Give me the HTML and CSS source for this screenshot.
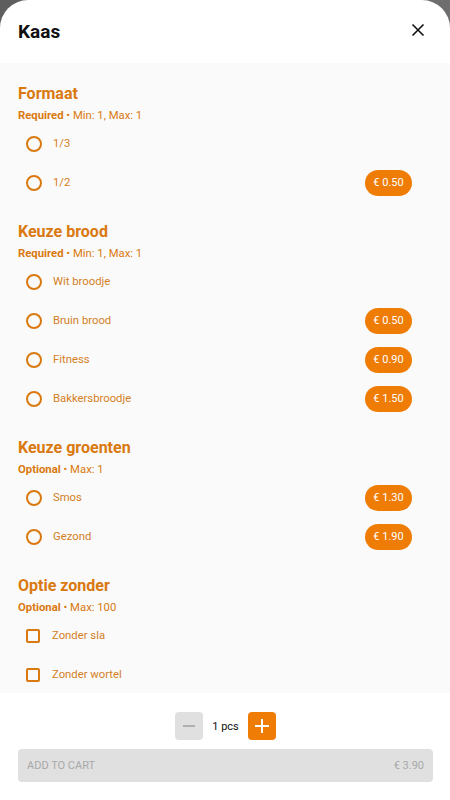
FILE: index.html
```html
<!DOCTYPE html>
<html>
<head>
<meta charset="utf-8">
<link rel="stylesheet" href="styles.css">
</head>
<body>
<div class="sheet">
  <header class="head">
    <h1 class="title">Kaas</h1>
    <button class="close" aria-label="Close">
      <svg width="14" height="14" viewBox="0 0 14 14"><path d="M1.5 1.5L12.5 12.5M12.5 1.5L1.5 12.5" stroke="#111" stroke-width="1.6" fill="none"/></svg>
    </button>
  </header>
  <main class="content">
    <section class="group">
      <h2 class="g-title">Formaat</h2>
      <div class="g-sub"><b>Required</b> • Min: 1, Max: 1</div>
      <div class="row"><span class="radio"></span><span class="label">1/3</span></div>
      <div class="row"><span class="radio"></span><span class="label">1/2</span><span class="pill">€ 0.50</span></div>
    </section>
    <section class="group">
      <h2 class="g-title">Keuze brood</h2>
      <div class="g-sub"><b>Required</b> • Min: 1, Max: 1</div>
      <div class="row"><span class="radio"></span><span class="label">Wit broodje</span></div>
      <div class="row"><span class="radio"></span><span class="label">Bruin brood</span><span class="pill">€ 0.50</span></div>
      <div class="row"><span class="radio"></span><span class="label">Fitness</span><span class="pill">€ 0.90</span></div>
      <div class="row"><span class="radio"></span><span class="label">Bakkersbroodje</span><span class="pill">€ 1.50</span></div>
    </section>
    <section class="group">
      <h2 class="g-title">Keuze groenten</h2>
      <div class="g-sub"><b>Optional</b> • Max: 1</div>
      <div class="row"><span class="radio"></span><span class="label">Smos</span><span class="pill">€ 1.30</span></div>
      <div class="row"><span class="radio"></span><span class="label">Gezond</span><span class="pill">€ 1.90</span></div>
    </section>
    <section class="group">
      <h2 class="g-title">Optie zonder</h2>
      <div class="g-sub"><b>Optional</b> • Max: 100</div>
      <div class="row"><span class="check"></span><span class="label">Zonder sla</span></div>
      <div class="row"><span class="check"></span><span class="label">Zonder wortel</span></div>
    </section>
  </main>
  <footer class="foot">
    <div class="qty">
      <button class="qbtn minus"><svg width="12" height="12" viewBox="0 0 12 12"><path d="M0 6H12" stroke="#b0b0b0" stroke-width="2"/></svg></button>
      <span class="qtext">1 pcs</span>
      <button class="qbtn plus"><svg width="14" height="14" viewBox="0 0 14 14"><path d="M0 7H14M7 0V14" stroke="#fff" stroke-width="2"/></svg></button>
    </div>
    <button class="cart"><span>ADD TO CART</span><span>€ 3.90</span></button>
  </footer>
</div>
</body>
</html>
```
FILE: styles.css
```css
* { box-sizing: border-box; }
html, body { margin: 0; padding: 0; }
body {
  width: 450px;
  height: 800px;
  overflow: hidden;
  background: linear-gradient(135deg, #5e5e5e, #8a8a8a);
  font-family: Roboto, "Noto Sans", sans-serif;
}
.sheet {
  height: 800px;
  background: #fff;
  border-radius: 28px 28px 0 0;
  display: flex;
  flex-direction: column;
  overflow: hidden;
}
.head {
  height: 63px;
  flex: none;
  display: flex;
  align-items: center;
  justify-content: space-between;
  padding: 0 25px 0 18px;
}
.title {
  margin: 0;
  font-size: 19px;
  font-weight: 700;
  color: #111;
  line-height: 24px;
  margin-top: 1px;
}
.close {
  border: 0;
  background: none;
  padding: 0;
  width: 14px;
  height: 14px;
  display: flex;
  margin-top: -4px;
}
.content {
  flex: 1;
  background: #fafafa;
  padding-top: 1px;
  overflow: hidden;
}
.group { margin-top: 20px; }
.g-title {
  margin: 0;
  padding-left: 18px;
  font-size: 16px;
  line-height: 20px;
  font-weight: 700;
  color: #d9790f;
}
.g-sub {
  margin-top: 4px;
  padding-left: 18px;
  font-size: 11.3px;
  line-height: 16px;
  color: #d9790f;
}
.g-sub b { font-weight: 700; }
.row {
  height: 39px;
  display: flex;
  align-items: center;
  padding: 0 38px 0 26px;
}
.radio {
  width: 16px;
  height: 16px;
  border: 2px solid #d9790f;
  border-radius: 50%;
  flex: none;
  margin-right: 11px;
}
.check {
  width: 14px;
  height: 14px;
  border: 2px solid #d9790f;
  border-radius: 2px;
  flex: none;
  margin-right: 12px;
}
.label {
  font-size: 11.3px;
  color: #d4801f;
  flex: 1;
}
.pill {
  background: #ef7c05;
  color: #fff;
  font-size: 11px;
  height: 26px;
  width: 47px;
  border-radius: 13px;
  display: flex;
  align-items: center;
  justify-content: center;
}
.foot {
  flex: none;
  height: 107px;
  background: #fff;
  padding: 19px 17px 0 18px;
  display: flex;
  flex-direction: column;
  align-items: center;
}
.qty {
  display: flex;
  align-items: center;
  height: 28px;
}
.qbtn {
  width: 28px;
  height: 28px;
  border: 0;
  border-radius: 4px;
  padding: 0;
  display: flex;
  align-items: center;
  justify-content: center;
}
.minus { background: #e0e0e0; }
.plus { background: #ef7c05; }
.qtext {
  font-size: 11px;
  color: #111;
  width: 45px;
  text-align: center;
}
.cart {
  margin-top: 9px;
  width: 415px;
  height: 33px;
  border: 0;
  border-radius: 4px;
  background: #e0e0e0;
  color: #a8a8a8;
  font-family: Roboto, sans-serif;
  font-size: 11px;
  display: flex;
  align-items: center;
  justify-content: space-between;
  padding: 0 9px;
}
```
